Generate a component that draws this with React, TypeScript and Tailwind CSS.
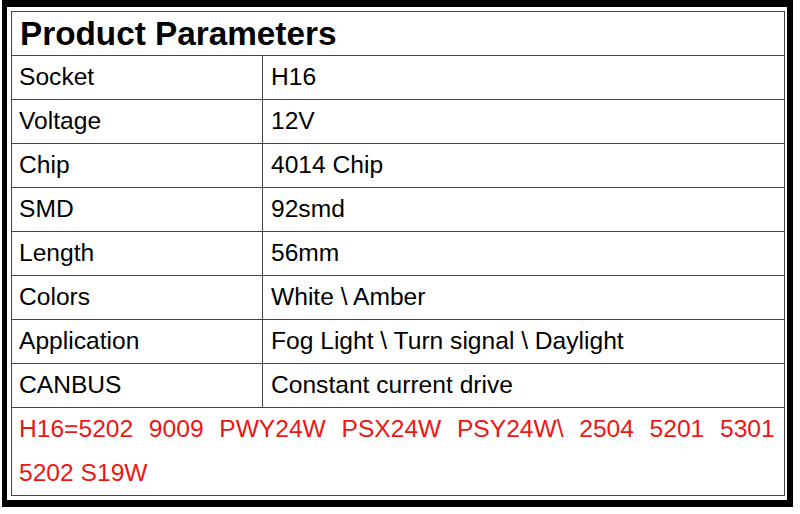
const rows: [string, string][] = [
  ["Socket", "H16"],
  ["Voltage", "12V"],
  ["Chip", "4014 Chip"],
  ["SMD", "92smd"],
  ["Length", "56mm"],
  ["Colors", "White \\ Amber"],
  ["Application", "Fog Light \\ Turn signal \\ Daylight"],
  ["CANBUS", "Constant current drive"],
];

export default function App() {
  return (
    <div className="w-[800px] h-[514px] bg-white font-['Liberation_Sans',Arial,sans-serif] text-black">
      {/* black frame */}
      <div className="ml-[2px] w-[791px] h-[507px] border-black border-l-[5px] border-t-[7px] border-r-[6px] border-b-[7px] pl-[4px] pr-[2px] pt-[4px] pb-[4px]">
        <div className="h-full border border-[#444] flex flex-col">
          {/* header */}
          <div className="h-[44px] shrink-0 border-b border-[#444] flex items-center pl-[8px]">
            <h1 className="font-bold text-[33.3px] leading-none">Product Parameters</h1>
          </div>

          {/* rows */}
          {rows.map(([label, value]) => (
            <div key={label} className="h-[44px] shrink-0 border-b border-[#444] flex text-[24.6px]">
              <div className="w-[251px] shrink-0 border-r border-[#444] flex items-center pl-[7px]">
                {label}
              </div>
              <div className="flex-1 flex items-center pl-[8px]">{value}</div>
            </div>
          ))}

          {/* compatible models */}
          <div className="flex-1 pl-[7px] text-[24.6px] text-[#ee1515] leading-[44px] -mt-[1px]">
            <div className="whitespace-pre [word-spacing:1px]">H16=5202  9009  PWY24W  PSX24W  PSY24W\  2504  5201  5301</div>
            <div className="whitespace-pre">5202 S19W</div>
          </div>
        </div>
      </div>
    </div>
  );
}
